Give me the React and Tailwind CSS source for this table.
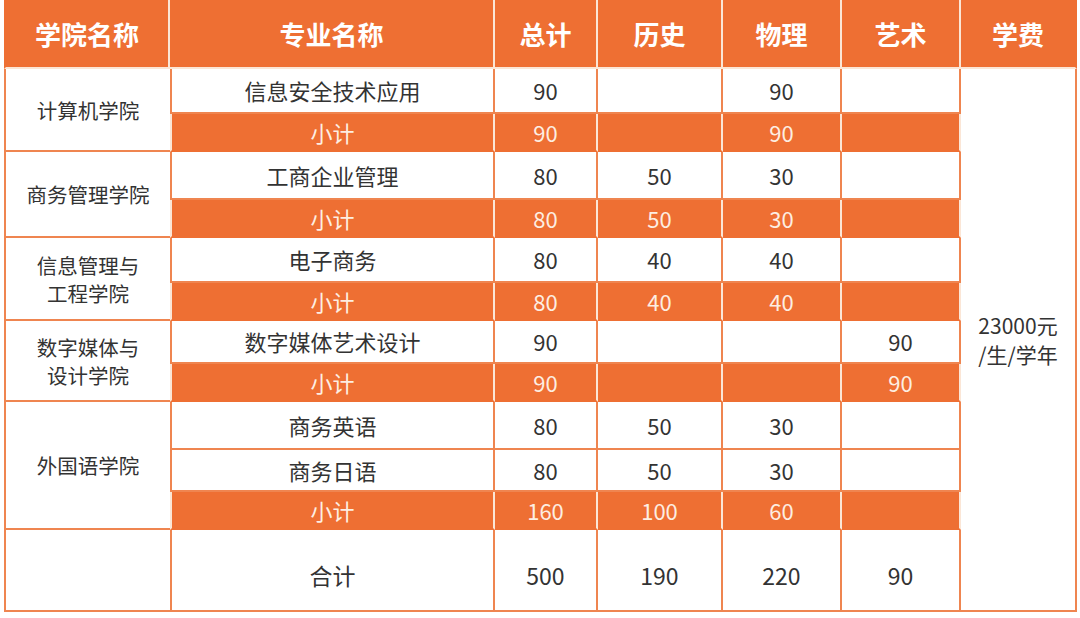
import React from "react";

const font = { fontFamily: '"Noto Sans CJK SC", "Noto Sans", sans-serif' };

function Head({ children, last }) {
  return (
    <div
      className={`flex items-center justify-center bg-[#ee6f33] text-white font-bold text-[26px] border-b-2 border-b-[#fbe6d6] ${
        last ? "border-r-2 border-r-[#ee6f33]" : "border-r-2 border-r-[#fbe6d6]"
      }`}
    >
      {children}
    </div>
  );
}

// college name cell on the left, spans several rows
function College({ children, span }) {
  return (
    <div
      className={`${span} flex items-center justify-center text-center leading-[28px] text-[20.5px] text-[#333] bg-white border-l-2 border-b-2 border-[#ef8550]`}
    >
      {children}
    </div>
  );
}

function Major({ name, total, hist, phys, art, big }) {
  const c = `flex items-center justify-center ${
    big ? "text-[23px] pt-[10px]" : "text-[22px]"
  } text-[#333] bg-white border-r-2 border-b-2 border-[#ef8550]`;
  return (
    <>
      <div className={`${c} border-l-2 ${big ? "" : "text-[21.5px]"}`}>{name}</div>
      <div className={c}>{total}</div>
      <div className={c}>{hist}</div>
      <div className={`${c} text-[#222]`}>{phys}</div>
      <div className={c}>{art}</div>
    </>
  );
}

function Sub({ total, hist, phys, art }) {
  const c =
    "flex items-center justify-center text-[22px] text-[#fdeee2] bg-[#ee6f33] border-r-2 border-b-2 border-r-[#fbe6d6] border-b-[#ee6f33]";
  return (
    <>
      <div className={`${c} text-[21.5px] border-l-2 border-l-[#fbe6d6]`}>小计</div>
      <div className={c}>{total}</div>
      <div className={c}>{hist}</div>
      <div className={c}>{phys}</div>
      <div className={c}>{art}</div>
    </>
  );
}

export default function App() {
  return (
    <div className="w-[1080px] h-[618px] bg-white pl-[4px]" style={font}>
      <div className="grid grid-cols-[166px_325px_103px_125px_119px_119px_116px] grid-rows-[69px_45px_38px_48px_38px_45px_38px_43px_38px_48px_42px_38px_82px]">
        <div className="flex items-center justify-center bg-[#ee6f33] text-white font-bold text-[26px] border-l-2 border-l-[#ee6f33] border-r-2 border-r-[#fbe6d6] border-b-2 border-b-[#fbe6d6]">
          学院名称
        </div>
        <Head>专业名称</Head>
        <Head>总计</Head>
        <Head>历史</Head>
        <Head>物理</Head>
        <Head>艺术</Head>
        <Head last>学费</Head>

        <College span="row-span-2">计算机学院</College>
        <Major name="信息安全技术应用" total="90" phys="90" />
        <div className="row-span-12 flex items-center justify-center text-center leading-[29px] text-[21px] text-[#333] bg-white border-r-2 border-b-2 border-[#ef8550]">
          23000元
          <br />
          /生/学年
        </div>
        <Sub total="90" phys="90" />

        <College span="row-span-2">商务管理学院</College>
        <Major name="工商企业管理" total="80" hist="50" phys="30" />
        <Sub total="80" hist="50" phys="30" />

        <College span="row-span-2">
          信息管理与
          <br />
          工程学院
        </College>
        <Major name="电子商务" total="80" hist="40" phys="40" />
        <Sub total="80" hist="40" phys="40" />

        <College span="row-span-2">
          数字媒体与
          <br />
          设计学院
        </College>
        <Major name="数字媒体艺术设计" total="90" art="90" />
        <Sub total="90" art="90" />

        <College span="row-span-3">外国语学院</College>
        <Major name="商务英语" total="80" hist="50" phys="30" />
        <Major name="商务日语" total="80" hist="50" phys="30" />
        <Sub total="160" hist="100" phys="60" />

        <div className="bg-white border-l-2 border-b-2 border-[#ef8550]" />
        <Major name="合计" total="500" hist="190" phys="220" art="90" big />
      </div>
    </div>
  );
}
